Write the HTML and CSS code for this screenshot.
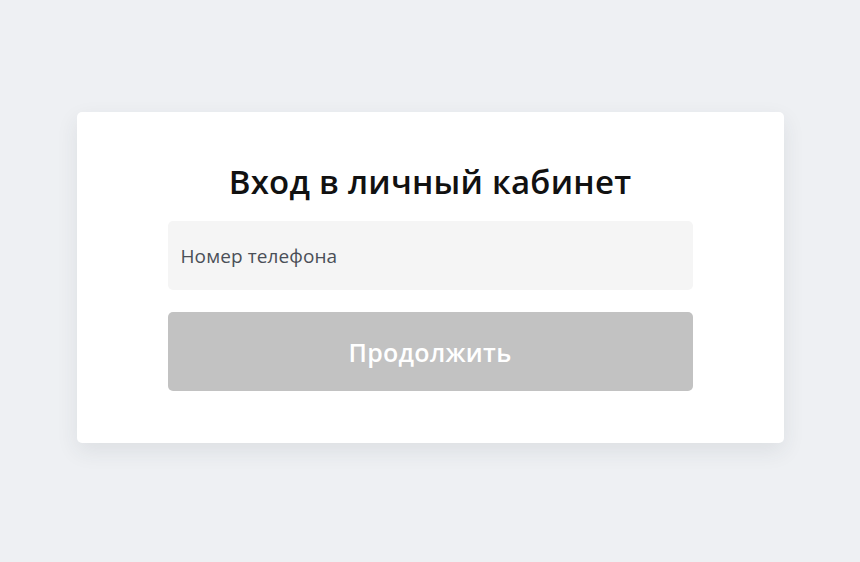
FILE: index.html
```html
<!DOCTYPE html>
<html lang="ru">
<head>
<meta charset="utf-8">
<title>Вход</title>
<link rel="stylesheet" href="styles.css">
</head>
<body>
<main class="page">
  <section class="card">
    <h1 class="title">Вход в личный кабинет</h1>
    <form class="form">
      <input class="field" type="tel" placeholder="Номер телефона">
      <button class="submit" type="button" disabled>Продолжить</button>
    </form>
  </section>
</main>
</body>
</html>
```
FILE: styles.css
```css
html, body {
  margin: 0;
  padding: 0;
}
body {
  background: #eef0f3;
  font-family: "Open Sans", "Noto Sans", sans-serif;
  width: 860px;
  height: 562px;
  overflow: hidden;
}
.page {
  display: flex;
  justify-content: center;
  padding-top: 112px;
}
.card {
  box-sizing: border-box;
  width: 707px;
  height: 331px;
  background: #ffffff;
  border-radius: 5px;
  box-shadow: 0 8px 22px rgba(40, 50, 70, 0.09);
  padding: 50px 91px 52px;
}
.title {
  margin: 0 0 19px;
  font-size: 33px;
  line-height: 40px;
  font-weight: 600;
  letter-spacing: 0.25px;
  color: #111111;
  text-align: center;
}
.form {
  display: flex;
  flex-direction: column;
  gap: 22px;
}
.field {
  box-sizing: border-box;
  height: 69px;
  width: 100%;
  border: none;
  border-radius: 5px;
  background: #f5f5f5;
  padding: 0 13px;
  font-family: inherit;
  font-size: 19px;
  letter-spacing: 0.1px;
  color: #333;
  outline: none;
}
.field::placeholder {
  color: #4a4f57;
}
.submit {
  height: 79px;
  width: 100%;
  border: none;
  border-radius: 5px;
  background: #c2c2c2;
  color: #ffffff;
  font-family: inherit;
  font-size: 25px;
  font-weight: 600;
  letter-spacing: 0.3px;
}
```
